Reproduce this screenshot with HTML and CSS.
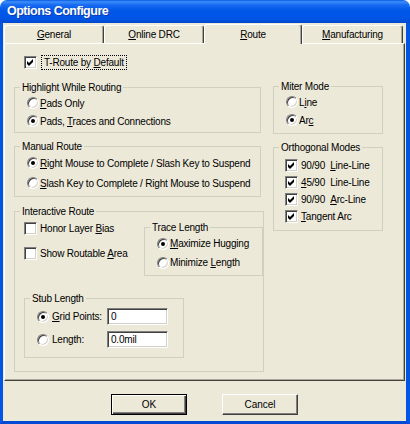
FILE: index.html
```html
<!DOCTYPE html>
<html>
<head>
<meta charset="utf-8">
<title>Options Configure</title>
<link rel="stylesheet" href="styles.css">
</head>
<body>
<div class="window">
  <div class="titlebar"><span class="title">Options Configure</span></div>
  <div class="frame">
    <div class="tabs">
      <div class="tab"><span><u>G</u>eneral</span></div>
      <div class="tab"><span><u>O</u>nline DRC</span></div>
      <div class="tab active"><span><u>R</u>oute</span></div>
      <div class="tab last"><span><u>M</u>anufacturing</span></div>
    </div>
    <div class="panel">
      <div class="opt troute">
        <span class="cb"><svg viewBox="0 0 11 11" width="11" height="11"><polygon points="2,4 4,6 8,2 8,5 4,9 2,7" fill="#000"/></svg></span>
        <span class="focus">T-Route by <u>D</u>efault</span>
      </div>
      <div class="columns">
        <div class="col-left">
          <fieldset class="grp g-highlight">
            <legend>Highlight While Routing</legend>
            <div class="body pad-r">
              <div class="opt h18"><span class="rb"></span><span class="lbl"><u>P</u>ads Only</span></div>
              <div class="opt h18"><span class="rb on"></span><span class="lbl">Pads, <u>T</u>races and Connections</span></div>
            </div>
          </fieldset>
          <fieldset class="grp g-manual">
            <legend>Manual Route</legend>
            <div class="body pad-r">
              <div class="opt h20"><span class="rb on"></span><span class="lbl"><u>R</u>ight Mouse to Complete / Slash Key to Suspend</span></div>
              <div class="opt h20"><span class="rb"></span><span class="lbl"><u>S</u>lash Key to Complete / Right Mouse to Suspend</span></div>
            </div>
          </fieldset>
          <fieldset class="grp g-interactive">
            <legend>Interactive Route</legend>
            <div class="body ir-body">
              <div class="ir-top">
                <div class="ir-checks">
                  <div class="opt h18"><span class="cb"></span><span class="lbl">Honor Layer <u>B</u>ias</span></div>
                  <div class="opt h18"><span class="cb"></span><span class="lbl">Show Routable <u>A</u>rea</span></div>
                </div>
                <fieldset class="grp g-trace">
                  <legend>Trace Length</legend>
                  <div class="body pad-r">
                    <div class="opt h19"><span class="rb on"></span><span class="lbl"><u>M</u>aximize Hugging</span></div>
                    <div class="opt h19"><span class="rb"></span><span class="lbl">Minimize <u>L</u>ength</span></div>
                  </div>
                </fieldset>
              </div>
              <fieldset class="grp g-stub">
                <legend>Stub Length</legend>
                <div class="body pad-r">
                  <div class="opt h23"><span class="rb on"></span><span class="lbl fixed"><u>G</u>rid Points:</span><span class="input">0</span></div>
                  <div class="opt h23"><span class="rb"></span><span class="lbl fixed">Length:</span><span class="input">0.0mil</span></div>
                </div>
              </fieldset>
            </div>
          </fieldset>
        </div>
        <div class="col-right">
          <fieldset class="grp g-miter">
            <legend>Miter Mode</legend>
            <div class="body pad-r">
              <div class="opt h18"><span class="rb"></span><span class="lbl">L<u>i</u>ne</span></div>
              <div class="opt h18"><span class="rb on"></span><span class="lbl">Ar<u>c</u></span></div>
            </div>
          </fieldset>
          <fieldset class="grp g-ortho">
            <legend>Orthogonal Modes</legend>
            <div class="body pad-c">
              <div class="opt h17"><span class="cb"><svg viewBox="0 0 11 11" width="11" height="11"><polygon points="2,4 4,6 8,2 8,5 4,9 2,7" fill="#000"/></svg></span><span class="lbl">90/90 &nbsp;<u>L</u>ine-Line</span></div>
              <div class="opt h17"><span class="cb"><svg viewBox="0 0 11 11" width="11" height="11"><polygon points="2,4 4,6 8,2 8,5 4,9 2,7" fill="#000"/></svg></span><span class="lbl"><u>4</u>5/90 &nbsp;Line-Line</span></div>
              <div class="opt h17"><span class="cb"><svg viewBox="0 0 11 11" width="11" height="11"><polygon points="2,4 4,6 8,2 8,5 4,9 2,7" fill="#000"/></svg></span><span class="lbl">90/90 &nbsp;<u>A</u>rc-Line</span></div>
              <div class="opt h17"><span class="cb"><svg viewBox="0 0 11 11" width="11" height="11"><polygon points="2,4 4,6 8,2 8,5 4,9 2,7" fill="#000"/></svg></span><span class="lbl"><u>T</u>angent Arc</span></div>
            </div>
          </fieldset>
        </div>
      </div>
    </div>
    <div class="buttons">
      <button class="btn default">OK</button>
      <button class="btn">Cancel</button>
    </div>
  </div>
</div>
</body>
</html>
```
FILE: styles.css
```css
* { box-sizing: border-box; }
html, body { margin: 0; padding: 0; }
body {
  background: #fff;
  font-family: "Liberation Sans", Arial, sans-serif;
  font-size: 10px;
  letter-spacing: -0.2px;
  line-height: 13px;
  color: #000;
}
u { text-decoration-thickness: 1px; text-underline-offset: 1px; }

.window { width: 410px; height: 424px; display: flex; flex-direction: column; }

.titlebar {
  height: 23px;
  flex: none;
  border-radius: 7px 7px 0 0;
  background: linear-gradient(to bottom, #0a5ae6 0%, #3d8ff9 8%, #1a6cf2 20%, #0058e8 45%, #0055e5 80%, #0049cf 100%);
  display: flex;
  align-items: center;
  padding-left: 7px;
}
.title {
  color: #fff;
  font-weight: bold;
  font-size: 12.5px;
  letter-spacing: -0.5px;
  text-shadow: 1px 1px 0 #0b3bb0;
}

.frame {
  flex: 1;
  background: #ece9d8;
  border-left: 3px solid #0055e5;
  border-right: 4px solid #0055e5;
  border-bottom: 3px solid #004ad4;
  display: flex;
  flex-direction: column;
}

.tabs {
  display: flex;
  align-items: flex-end;
  height: 20px;
  padding-left: 1px;
  position: relative;
  z-index: 1;
}
.tab {
  width: 100px;
  height: 18px;
  border: 1px solid #fff;
  border-bottom: none;
  border-right-color: #404040;
  border-radius: 3px 3px 0 0;
  box-shadow: inset -1px 0 0 #aca899;
  background: #ece9d8;
  display: flex;
  justify-content: center;
  align-items: center;
}
.tab.active { width: 98px; height: 20px; margin-bottom: -1px; }
.tab.last { width: 101px; }

.panel {
  margin-left: 1px;
  width: 401px;
  height: 338px;
  border: 1px solid;
  border-color: #fff #404040 #404040 #fff;
  box-shadow: inset -1px -1px 0 #aca899;
  padding: 11px 0 0 9px;
}

.opt { display: flex; align-items: center; white-space: nowrap; }
.h17 { height: 17px; }
.h18 { height: 18px; }
.h19 { height: 19px; }
.h20 { height: 20px; }
.h23 { height: 23px; }

.troute { margin-left: 10px; height: 14px; }
.focus {
  display: block;
  border: 1px dotted #000;
  padding: 0 2px;
  margin-left: 1px;
  height: 15px;
  line-height: 13px;
}

.cb {
  width: 13px;
  height: 13px;
  flex: none;
  background: #fff;
  border: 1px solid;
  border-color: #808080 #fff #fff #808080;
  box-shadow: inset 1px 1px 0 #404040, inset -1px -1px 0 #d4d0c8;
  display: block;
  margin-right: 3px;
}
.cb svg { display: block; }

.rb {
  width: 12px;
  height: 12px;
  flex: none;
  border-radius: 50%;
  background: #fff;
  border: 1px solid;
  border-color: #808080 #fff #fff #808080;
  box-shadow: inset 1px 1px 0 #404040, inset -1px -1px 0 #d4d0c8;
  display: flex;
  align-items: center;
  justify-content: center;
  margin-right: 1px;
}
.rb.on::after {
  content: "";
  width: 4px;
  height: 4px;
  border-radius: 50%;
  background: #000;
}

.columns { display: flex; gap: 9px; margin-top: 11px; align-items: flex-start; }
.col-left { width: 250px; padding-top: 1px; display: flex; flex-direction: column; }
.col-right { width: 110px; display: flex; flex-direction: column; }

.grp {
  margin: 0;
  padding: 0;
  min-width: 0;
  border: 1px solid #d0d0bf;
}
.grp legend {
  padding: 0 2px;
  margin-left: 5px;
  line-height: 13px;
}
.pad-r { padding-left: 12px; }
.pad-c { padding-left: 11px; padding-top: 3px; }

.g-highlight { width: 247px; height: 52px; }
.g-manual { width: 247px; height: 57px; margin-top: 7px; }
.g-interactive { width: 250px; height: 167px; margin-top: 8px; }
.ir-body { padding-left: 9px; }
.ir-top { display: flex; align-items: flex-start; }
.ir-checks { width: 120px; padding-top: 1px; display: flex; flex-direction: column; gap: 7px; }
.g-trace { width: 119px; height: 55px; margin-top: 3px; }
.g-stub { width: 160px; height: 66px; margin-top: 16px; }
.lbl.fixed { width: 55px; margin-left: 2px; }
.input {
  width: 61px;
  height: 17px;
  background: #fff;
  border: 1px solid;
  border-color: #808080 #fff #fff #808080;
  box-shadow: inset 1px 1px 0 #404040, inset -1px -1px 0 #d4d0c8;
  padding-left: 3px;
  display: flex;
  align-items: center;
}

.g-miter { width: 110px; height: 54px; }
.g-ortho { width: 110px; height: 90px; margin-top: 7px; }

.buttons {
  display: flex;
  justify-content: center;
  gap: 35px;
  padding-top: 13px;
}
.btn {
  width: 76px;
  height: 21px;
  margin: 0;
  padding: 0;
  font: inherit;
  color: #000;
  background: #ece9d8;
  border: 1px solid;
  border-color: #fff #404040 #404040 #fff;
  box-shadow: inset -1px -1px 0 #808080;
}
.btn.default {
  border: 1px solid #000;
  box-shadow: inset 1px 1px 0 #fff, inset -1px -1px 0 #404040, inset -2px -2px 0 #808080;
}
```
